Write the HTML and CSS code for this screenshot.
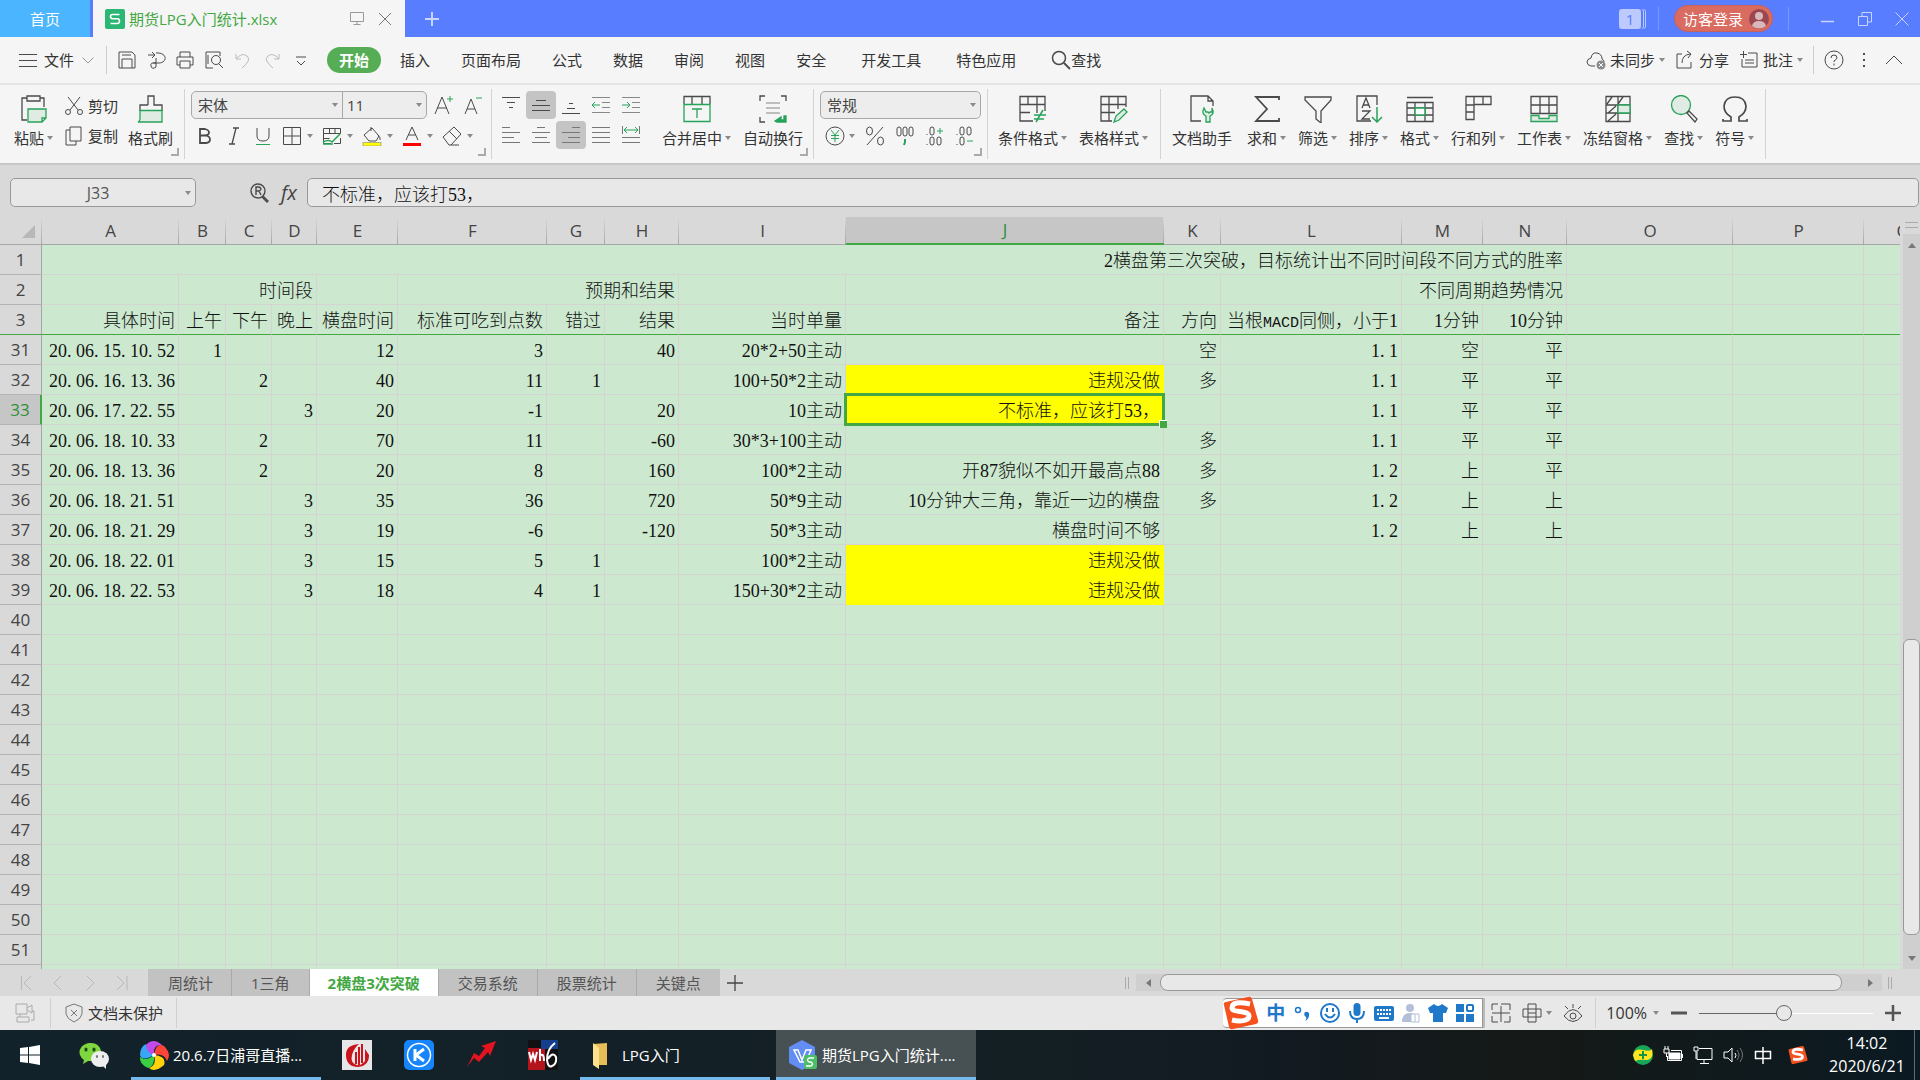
FILE: index.html
```html
<!DOCTYPE html>
<html lang="zh-CN">
<head>
<meta charset="utf-8">
<title>期货LPG入门统计.xlsx</title>
<link rel="stylesheet" href="styles.css">
</head>
<body>
<header class="titlebar">
  <button class="home-tab">首页</button>
  <div class="doc-tab">
    <svg class="i20" viewBox="0 0 20 20"><rect width="20" height="20" rx="2" fill="#2bb673"/><path d="M14.500 5.500h-7q-2 0-2 2t2 2.300h5q2 0 2 2.300t-2 2.400h-7" fill="none" stroke="#fff" stroke-width="1.600"/></svg>
    <span class="doc-name">期货LPG入门统计.xlsx</span>
    <button aria-label="窗口"><svg class="i16" viewBox="0 0 16 16"><path d="M1.500 1.500h13v9h-13zM8 10.500v3M4.500 13.500h7" stroke="#999"/></svg></button>
    <button aria-label="关闭标签"><svg class="i16" viewBox="0 0 16 16"><path d="M2 2l12 12M14 2L2 14" stroke="#777"/></svg></button>
  </div>
  <button class="new-tab" aria-label="新建"><svg class="i16" viewBox="0 0 16 16"><path d="M8 1v14M1 8h14" stroke="#c9d5ff" stroke-width="2"/></svg></button>
  <div class="title-right">
    <button class="count">1</button>
    <i class="tsep"></i>
    <button class="login">访客登录<svg class="i20" viewBox="0 0 20 20"><circle cx="10" cy="10" r="10" fill="#9c4650"/><circle cx="10" cy="7" r="4" fill="#d9b8bc"/><path d="M3 17q1-5 7-5t7 5q-7 5-14 0" fill="#d9b8bc"/></svg></button>
    <i class="tsep"></i>
    <div class="win">
      <button aria-label="最小化"><svg class="i16" viewBox="0 0 16 16"><path d="M1 10.500h13" stroke="#c9d5ff" stroke-width="1.500"/></svg></button>
      <button aria-label="还原"><svg class="i16" viewBox="0 0 16 16"><path d="M1.500 5.500h9v9h-9zM5 5V1.500h9.500V11H11" stroke="#c9d5ff"/></svg></button>
      <button aria-label="关闭"><svg class="i16" viewBox="0 0 16 16"><path d="M1.500 1.500l13 13M14.500 1.500l-13 13" stroke="#c9d5ff"/></svg></button>
    </div>
  </div>
</header>

<div class="menubar">
  <button class="file"><svg class="i20" viewBox="0 0 20 20"><path d="M1 4.500h18M1 10.500h18M1 16.500h18"/></svg>文件<svg class="i12" viewBox="0 0 12 12"><path d="M.5 3.500L6 9l5.500-5.500" stroke="#999"/></svg></button>
  <i class="msep"></i>
  <div class="quick">
    <button aria-label="保存"><svg class="i20" viewBox="0 0 20 20"><path d="M2 2h13l3 3v13H2zM5 18V9h10v9M5 5h9"/></svg></button>
    <button aria-label="输出"><svg class="i20" viewBox="0 0 20 20"><path d="M2 5h7M6 2l3 3-3 3M10 3c12-1 12 11 1 10H7M10 8v9q-4 3-5-1t5-3"/></svg></button>
    <button aria-label="打印"><svg class="i20" viewBox="0 0 20 20"><path d="M5 7V2h10v5M5 15H2V7h16v8h-3M5 11h10v7H5z"/></svg></button>
    <button aria-label="预览"><svg class="i20" viewBox="0 0 20 20"><path d="M9 18H2V2h14v4M15 14l4 4M4 5v9"/><circle cx="12" cy="10" r="4.500"/></svg></button>
    <button aria-label="撤销"><svg class="i20" viewBox="0 0 20 20"><path d="M3 4v5h5M3 9q6-7 11-3t-5 12" stroke="#bbb"/></svg></button>
    <button aria-label="重做"><svg class="i20" viewBox="0 0 20 20"><path d="M17 4v5h-5M17 9q-6-7-11-3t5 12" stroke="#bbb"/></svg></button>
    <button aria-label="自定义"><svg class="i20" viewBox="0 0 20 20"><path d="M5 7h10M6 11l4 4 4-4"/></svg></button>
  </div>
  <nav class="tabs">
    <button class="current">开始</button><button>插入</button><button>页面布局</button><button>公式</button><button>数据</button><button>审阅</button><button>视图</button><button>安全</button>
  </nav>
  <nav class="tabs wide">
    <button>开发工具</button><button>特色应用</button>
    <button class="find"><svg class="i20" viewBox="0 0 20 20"><circle cx="8" cy="8" r="6.500" stroke-width="1.500"/><path d="M13 13l6 6" stroke-width="1.800"/></svg>查找</button>
  </nav>
  <div class="menu-right">
    <button><svg class="i20" viewBox="0 0 20 20"><path d="M9 16H5q-4-1-4-4t4-4q1-6 6-5 5 1 5 6 2 1 2 3"/><circle cx="15" cy="15" r="4.500" fill="#8a8a8a" stroke="none"/><path d="M13 13l4 4M17 13l-4 4" stroke="#fff"/></svg>未同步<i class="caret"></i></button>
    <button><svg class="i20" viewBox="0 0 20 20"><path d="M7 4H2v14h14v-6M7 13q0-8 8-9M12 1l4 3-3 4"/></svg>分享</button>
    <button><svg class="i20" viewBox="0 0 20 20"><path d="M9 3h9v14H3V9M1 4.500h7M4.500 1v7M6 10h9M6 13h9"/></svg>批注<i class="caret"></i></button>
    <i class="msep"></i>
    <button aria-label="帮助"><svg class="i20" viewBox="0 0 20 20"><circle cx="10" cy="10" r="9"/><path d="M7 8q0-3 3-3t3 3q0 1-3 3v1M10 13.500v2"/></svg></button>
    <button aria-label="更多"><svg class="i20" viewBox="0 0 20 20"><path d="M10 3v2M10 9v2M10 15v2" stroke-width="2"/></svg></button>
    <button aria-label="折叠"><svg class="i20" viewBox="0 0 20 20"><path d="M2 14l8-8 8 8"/></svg></button>
  </div>
</div>

<div class="ribbon">
  <section class="group clip">
    <button class="big"><svg viewBox="0 0 28 28"><path d="M7 3H2v22h5M20 3h4v9M7 1h13v5H7z"/><path class="g" d="M8 14h18v9l-4 4H8zM26 23h-4v4"/></svg><span>粘贴<i class="caret"></i></span></button>
    <div class="pair">
      <button><svg class="i20" viewBox="0 0 20 20"><path d="M4 1l10 13M16 1L6 14"/><circle cx="4" cy="16" r="2.500"/><circle cx="16" cy="16" r="2.500"/></svg>剪切</button>
      <button><svg class="i20" viewBox="0 0 20 20"><path d="M6 1h11v14H6zM6 4H2v15h10v-4"/></svg>复制</button>
    </div>
    <button class="big"><svg viewBox="0 0 28 28"><path d="M11 10V1h6v9h8v6M3 16v-6h8"/><path class="g" d="M3 15.500h22V27H1q2-1 2-3z"/></svg><span>格式刷</span></button>
  </section>
  <section class="group font">
    <div class="row">
      <div class="combo">
        <label class="pick grow"><select aria-label="字体"><option>宋体</option></select></label><label class="pick size"><select aria-label="字号"><option>11</option></select></label>
      </div>
      <button aria-label="增大字号"><svg class="i20" viewBox="0 0 20 20"><path d="M1 19L8 2l7 17M3 13h10"/><path class="gl" d="M13 4h6M16 1v6"/></svg></button>
      <button aria-label="减小字号"><svg class="i20" viewBox="0 0 20 20"><path d="M1 19L7 4l6 15M3 14h8"/><path class="gl" d="M12 3h6"/></svg></button>
    </div>
    <div class="row tools">
      <button aria-label="加粗"><svg class="i20" viewBox="0 0 20 20"><path d="M5 3h5q4 1 4 3.500t-4 3H5zM5 9.500h6q4 1 4 4T11 17H5z" stroke-width="1.800"/></svg></button>
      <button aria-label="倾斜"><svg class="i20" viewBox="0 0 20 20"><path d="M9 2h6M5 18h6M12 2L8 18" stroke-width="1.300"/></svg></button>
      <button aria-label="下划线"><svg class="i20" viewBox="0 0 20 20"><path d="M4 2v8q0 5 6 5t6-5V2"/><path class="gl" d="M3 18.500h14"/></svg></button>
      <button aria-label="边框"><svg class="i20" viewBox="0 0 20 20"><path d="M1.500 1.500h17v17h-17zM10 1.500v17M1.500 10h17"/></svg><i class="caret"></i></button>
      <button aria-label="单元格样式"><svg class="i20" viewBox="0 0 20 20"><path d="M9 17.500H1.500v-15h17v5M18.500 12v5.500H12M1.500 7.500h17M1.500 12.500h6M7.500 3v5M13 3v5"/><path class="gl" d="M1 16q6-3 9 0l8-8M1 18h10" stroke-width="1.500"/></svg><i class="caret"></i></button>
      <button aria-label="填充颜色"><svg class="i20" viewBox="0 0 20 20"><path d="M9 1v4M2 9l8-7 7 8-3 5H7zM16 9q3 3 2 5"/><rect x="1" y="16.500" width="18" height="3.500" fill="#ff0" stroke="#888" stroke-width=".6"/></svg><i class="caret"></i></button>
      <button aria-label="字体颜色"><svg class="i20" viewBox="0 0 20 20"><path d="M4 14l6-13 6 13M6.500 9h7"/><path d="M1 18.500h18" stroke="red" stroke-width="3"/></svg><i class="caret"></i></button>
      <button aria-label="清除"><svg class="i20" viewBox="0 0 20 20"><path d="M1 11L12 1l7 7-10 11H7zM7 5l8 8M9 19h8"/></svg><i class="caret"></i></button>
    </div>
  </section>
  <section class="group align">
    <div class="aligns">
      <button aria-label="顶端对齐"><svg class="i20" viewBox="0 0 20 20"><path d="M1 2.500h18M6 7.500h8M8 12.500h4"/></svg></button>
      <button class="on" aria-label="垂直居中"><svg class="i20" viewBox="0 0 20 20"><path d="M5 5.500h10M1 10.500h18M1 15.500h18"/></svg></button>
      <button aria-label="底端对齐"><svg class="i20" viewBox="0 0 20 20"><path d="M8 8.500h4M6 13.500h8M1 18.500h18"/></svg></button>
      <button aria-label="减少缩进"><svg class="i20" viewBox="0 0 20 20"><path d="M1 2.500h18M11 7.500h8M11 12.500h8M1 17.500h18" stroke="#888"/><path class="gl" d="M1 10h8M4 7l-3 3 3 3"/></svg></button>
      <button aria-label="增加缩进"><svg class="i20" viewBox="0 0 20 20"><path d="M1 2.500h18M11 7.500h8M11 12.500h8M1 17.500h18" stroke="#888"/><path class="gl" d="M1 10h8M6 7l3 3-3 3"/></svg></button>
      <button aria-label="左对齐"><svg class="i20" viewBox="0 0 20 20"><path d="M1 2.500h8M1 7.500h18M1 12.500h12M1 17.500h18" stroke="#777"/></svg></button>
      <button aria-label="居中"><svg class="i20" viewBox="0 0 20 20"><path d="M6 2.500h8M1 7.500h18M4 12.500h12M1 17.500h18" stroke="#777"/></svg></button>
      <button class="on" aria-label="右对齐"><svg class="i20" viewBox="0 0 20 20"><path d="M11 2.500h8M1 7.500h18M7 12.500h12M1 17.500h18" stroke="#777"/></svg></button>
      <button aria-label="两端对齐"><svg class="i20" viewBox="0 0 20 20"><path d="M1 2.500h18M1 7.500h18M1 12.500h18M1 17.500h18" stroke="#777"/></svg></button>
      <button aria-label="分散对齐"><svg class="i20" viewBox="0 0 20 20"><path d="M1.500 1v8M18.500 1v8M1 12.500h18M1 17.500h18" stroke="#777"/><path class="gl" d="M3 5h14M6 2L3 5l3 3M14 2l3 3-3 3"/></svg></button>
    </div>
    <button class="big"><svg viewBox="0 0 28 28"><path d="M1 9V1.500h26V9M9 2v7M19 2v7"/><path class="gl" d="M1 9.500h26v17H1zM9 14h10M14 14v9"/></svg><span>合并居中<i class="caret"></i></span></button>
    <button class="big"><svg viewBox="0 0 28 28"><path d="M1 6V1h5M22 1h5v5M1 22v5h5"/><path d="M7 8h14M7 13h14M7 18h14" stroke="#aaa"/><path d="M16 26l6-4v3h3v-4h2v6h-9z" fill="#27a35a" stroke="#27a35a"/></svg><span>自动换行</span></button>
  </section>
  <section class="group number">
    <div class="combo"><label class="pick grow"><select aria-label="数字格式"><option>常规</option></select></label></div>
    <div class="row nums">
      <button aria-label="货币"><svg class="i20" viewBox="0 0 20 20"><circle cx="10" cy="10" r="9"/><path class="gl" d="M6 4l4 5 4-5M10 9v7M6 9.500h8M6 12.500h8"/></svg><i class="caret"></i></button>
      <button aria-label="百分比"><svg class="i20" viewBox="0 0 20 20"><path d="M18 1L2 19"/><ellipse cx="4.500" cy="5" rx="3" ry="4"/><ellipse cx="15.500" cy="15" rx="3" ry="4"/></svg></button>
      <button aria-label="千位分隔"><svg class="i20" viewBox="0 0 20 20"><rect x="2" y="1" width="4" height="9" rx="2"/><rect x="8" y="1" width="4" height="9" rx="2"/><rect x="14" y="1" width="4" height="9" rx="2"/><path class="gl" d="M10 13v3l-1 3" stroke-width="2"/></svg></button>
      <button aria-label="增加小数位"><svg class="i20" viewBox="0 0 20 20"><path d="M2 8v1M2 18v1"/><rect x="5" y="1" width="4" height="8" rx="2"/><rect x="5" y="11" width="4" height="8" rx="2"/><rect x="12" y="11" width="4" height="8" rx="2"/><path class="gl" d="M12 5h6M15 2v6"/></svg></button>
      <button aria-label="减少小数位"><svg class="i20" viewBox="0 0 20 20"><path d="M2 8v1M2 18v1"/><rect x="5" y="1" width="4" height="8" rx="2"/><rect x="12" y="1" width="4" height="8" rx="2"/><rect x="5" y="11" width="4" height="8" rx="2"/><path class="gl" d="M12 15h6"/></svg></button>
    </div>
  </section>
  <section class="group styles">
    <button class="big"><svg viewBox="0 0 28 28"><path d="M26 16V1.500H1V26h13M1 9.500h25M1 17.500h10M9 2v8M18 2v16"/><path class="gl" d="M15 20h12M15 24h10M24 15l-7 12" stroke-width="1.500"/></svg><span>条件格式<i class="caret"></i></span></button>
    <button class="big"><svg viewBox="0 0 28 28"><path d="M26 12V1.500H1V26h11M1 9.500h25M1 17.500h14M9 2v24M18 2v12"/><path class="g" d="M14 27l2-6 8-7 3 3-8 8z"/></svg><span>表格样式<i class="caret"></i></span></button>
  </section>
  <section class="group edit">
    <button class="big"><svg viewBox="0 0 28 28"><path d="M13 26H3V1h17l5 5v5M20 1v5h5"/><path class="g" d="M16 13q-3 6 2 8v6h4v-6q5-2 2-8v4h-2l-1 1-1-1h-2z"/></svg><span>文档助手</span></button>
    <button class="big"><svg viewBox="0 0 28 28"><path d="M26 5V2H3l11 12L3 26h23v-3" stroke-width="1.800"/></svg><span>求和<i class="caret"></i></span></button>
    <button class="big"><svg viewBox="0 0 28 28"><path d="M1 2h26v3L17 16v12l-5-4v-8L1 5z"/></svg><span>筛选<i class="caret"></i></span></button>
    <button class="big"><svg viewBox="0 0 28 28"><path d="M22 10V1H2v25h14M7 13l4-10 4 10M8 10h6M7 16h8l-8 8h8"/><path class="gl" d="M22 12v15M17 22l5 5 5-5" stroke-width="1.500"/></svg><span>排序<i class="caret"></i></span></button>
    <button class="big"><svg viewBox="0 0 28 28"><path d="M1 2.500h26M1 7.500h26v19H1zM1 13h26M1 20h26M9 8v18M19 8v18"/><path d="M9 13h10v7H9z" fill="#fff" stroke="#27a35a" stroke-width="1.500"/></svg><span>格式<i class="caret"></i></span></button>
    <button class="big"><svg viewBox="0 0 28 28"><path d="M2 1.500h25v8H10v15H2zM10 2v8H2M19 2v7M2 17h8"/></svg><span>行和列<i class="caret"></i></span></button>
    <button class="big"><svg viewBox="0 0 28 28"><path d="M1 1.500h26v17H1zM1 10h26M10 2v16M19 2v16"/><path class="g" d="M1 20.500h8v3h10v-3h8v6H1z"/></svg><span>工作表<i class="caret"></i></span></button>
    <button class="big"><svg viewBox="0 0 28 28"><path d="M2 1.500h24v25H2zM2 10h24M2 18h24M14 1v26M8 2L3 9M19 2l-5 7M12 11l-8 7M12 19l-8 7"/><path class="g" d="M14 10h12v8H14z"/></svg><span>冻结窗格<i class="caret"></i></span></button>
    <button class="big"><svg viewBox="0 0 28 28"><circle class="g" cx="11" cy="10" r="9.500"/><path d="M17 18l2-2 8 8-2 3z"/></svg><span>查找<i class="caret"></i></span></button>
    <button class="big"><svg viewBox="0 0 28 28"><path d="M2 24v2h8v-4Q3 18 3 11 4 2 14 2t11 9q0 7-7 11v4h8v-2" stroke-width="1.700"/></svg><span>符号<i class="caret"></i></span></button>
  </section>
</div>

<div class="formula">
  <label class="namebox"><input aria-label="名称框" value="J33"><i class="caret"></i></label>
  <div class="fx">
    <button aria-label="查找引用"><svg class="i20" viewBox="0 0 20 20" stroke-width="1.400"><circle cx="9" cy="8" r="7"/><path d="M7 12V4h3q2 1 2 2t-2 2H7M10 8l2 4M14 13l5 5-1 1-5-5"/></svg></button>
    <button aria-label="插入函数" class="fxb">fx</button>
  </div>
  <input class="expr" aria-label="编辑栏" value="不标准，应该打53，">
</div>

<main class="sheet">
  <div class="grid"><table id="cells"></table></div>
  <div class="vscroll">
    <i class="handle"></i>
    <button aria-label="向上"><i class="tri up"></i></button>
    <div class="track"><i class="thumb"></i></div>
    <button aria-label="向下"><i class="tri down"></i></button>
  </div>
</main>

<div class="sheetbar">
  <div class="navs">
    <button aria-label="第一张"><svg class="i16" viewBox="0 0 16 16"><path d="M3.500 1v14M13 1L6 8l7 7"/></svg></button>
    <button aria-label="上一张"><svg class="i16" viewBox="0 0 16 16"><path d="M11 1L4 8l7 7"/></svg></button>
    <button aria-label="下一张"><svg class="i16" viewBox="0 0 16 16"><path d="M5 1l7 7-7 7"/></svg></button>
    <button aria-label="最后一张"><svg class="i16" viewBox="0 0 16 16"><path d="M3 1l7 7-7 7M13 1v14"/></svg></button>
  </div>
  <div class="sheets"><button>周统计</button><button>1三角</button><button class="active">2横盘3次突破</button><button>交易系统</button><button>股票统计</button><button>关键点</button></div>
  <button class="add" aria-label="新建工作表"><svg class="i16" viewBox="0 0 16 16"><path d="M8 0v16M0 8h16" stroke="#444" stroke-width="1.300"/></svg></button>
  <div class="hscroll">
    <i class="bars"></i>
    <button aria-label="向左"><i class="tri left"></i></button>
    <div class="htrack"><i class="hthumb"></i></div>
    <button aria-label="向右"><i class="tri right"></i></button>
    <i class="bars"></i>
  </div>
</div>

<footer class="status">
  <button class="rec" aria-label="录制"><svg class="i20" viewBox="0 0 20 20"><path d="M1 1h11v10H1zM12 5l5-3v8l-5-3M4 14h10v5H2v-5zM17 8h2v9h-3M5 11v3" stroke="#aaa"/></svg></button>
  <i class="ssep"></i>
  <button class="protect"><svg class="i20" viewBox="0 0 20 20"><path d="M10 1l8 3v7q-1 5-8 8-7-3-8-8V4zM7 7l6 6M13 7l-6 6" stroke="#777"/></svg>文档未保护</button>
  <i class="ssep"></i>
  <div class="status-right">
    <div class="ime">
      <svg class="sogou" viewBox="0 0 36 34"><path d="M3 6q-3 0-2 3l5 22q1 3 4 2l23-5q3-1 2-4L29 3q-1-3-4-2z" fill="#f4511e"/><path d="M27 8q-18-4-18 4c0 5 17 2 17 8 0 5-9 6-17 4" fill="none" stroke="#fff" stroke-width="5"/></svg>
      <b>中</b>
      <svg class="i20" viewBox="0 0 20 20"><circle cx="5" cy="7" r="2.500" stroke="#1f78c8" stroke-width="1.500"/><path d="M12 9q5-1 4 4-1 4-4 5 2-2 1-4-3-2-1-5" fill="#1f78c8" stroke="none"/></svg>
      <svg class="i20" viewBox="0 0 20 20"><circle cx="10" cy="10" r="9" stroke="#1f78c8" stroke-width="2"/><path d="M7 5v4M13 5v4M5 11q5 7 10 0" stroke="#1f78c8" stroke-width="2"/></svg>
      <svg class="i20" viewBox="0 0 20 20"><rect x="6.500" y="0" width="7" height="13" rx="3.500" fill="#1f78c8" stroke="none"/><path d="M3 8q0 8 7 8t7-8M10 16v4" stroke="#1f78c8" stroke-width="2"/></svg>
      <svg class="i20" viewBox="0 0 20 20"><rect y="3" width="20" height="15" rx="2" fill="#1f78c8" stroke="none"/><path d="M3 7h14M3 11h14" stroke="#fff" stroke-width="2" stroke-dasharray="2 1"/><path d="M5 15h10" stroke="#fff" stroke-width="2"/></svg>
      <svg class="i20" viewBox="0 0 20 20"><circle cx="9" cy="5" r="4" fill="#b4bfd8" stroke="none"/><path d="M1 19q0-9 8-9t8 9z" fill="#b4bfd8" stroke="none"/><path d="M10 11h8v8h-8zM14 11v8" fill="#fff" stroke="#b4bfd8"/></svg>
      <svg class="i20" viewBox="0 0 20 20"><path d="M6 1q4 4 8 0l6 4-2 5h-3v9H5v-9H2L0 5z" fill="#1f78c8" stroke="none"/></svg>
      <svg class="i20" viewBox="0 0 20 20"><path d="M1 1h8v8H1zM1 11h8v8H1zM11 11h8v8h-8z" fill="#1f78c8" stroke="none"/><rect x="12" y="2" width="6" height="6" rx="1" stroke="#1f78c8" stroke-width="2"/></svg>
    </div>
    <div class="views">
      <button aria-label="普通视图"><svg class="i20" viewBox="0 0 20 20"><path d="M1 7V1h6M10 1h9v6M1 10h18M10 10V3M10 10v9M1 13v6h6M19 13v6h-6"/></svg></button>
      <button aria-label="分页预览"><svg class="i20" viewBox="0 0 20 20"><path d="M6 1h8v18H6zM1 6h18v8H1zM6 10h8"/></svg><i class="caret"></i></button>
      <button aria-label="护眼模式"><svg class="i20" viewBox="0 0 20 20"><path d="M1 13q9-13 18 0-9 11-18 0M10 1v4M2 3l3 3M18 3l-3 3"/><circle cx="10" cy="13" r="3"/></svg></button>
    </div>
    <i class="ssep"></i>
    <button class="pct">100%<i class="caret"></i></button>
    <button aria-label="缩小"><svg class="i16" viewBox="0 0 16 16"><path d="M0 8h16" stroke="#555" stroke-width="3"/></svg></button>
    <input type="range" aria-label="缩放" min="0" max="100" value="49">
    <button aria-label="放大"><svg class="i16" viewBox="0 0 16 16"><path d="M0 8h16M8 0v16" stroke="#555" stroke-width="2.500"/></svg></button>
  </div>
</footer>

<div class="taskbar">
  <button class="sq" aria-label="开始"><svg class="i20" viewBox="0 0 20 20"><path d="M0 3l8-1v7.500H0zM9 2l11-2v9.500H9zM0 10.500h8V18l-8-1zM9 10.500h11V20L9 18z" fill="#fff" stroke="none"/></svg></button>
  <button class="sq" aria-label="微信"><svg class="i30" viewBox="0 0 30 30"><path d="M10 3C3 4-1 10 1 15q1 3 4 5l-1 4 5-3q13 1 13-10-2-9-12-8" fill="#7fd63e" stroke="none"/><ellipse cx="21" cy="19" rx="9" ry="8" fill="#eee" stroke="none"/><path d="M24 26l3 3v-5" fill="#eee" stroke="none"/><path d="M7 9v1M15 9v1" stroke="#174b12" stroke-width="3" stroke-linecap="round"/><path d="M18 16v1M24 16v1" stroke="#777" stroke-width="2" stroke-linecap="round"/></svg></button>
  <button class="task run"><svg class="i30" viewBox="0 0 30 30"><path d="M15 15Q3 14 7 5q7-8 16 0-9-1-8 10" fill="#c04bea" stroke="none"/><path d="M15 15Q17 2 25 6q8 8 3 15-3-8-13-6" fill="#ff4538" stroke="none"/><path d="M15 15q13 1 10 10-9 8-15 3 8-3 5-13" fill="#ffd30b" stroke="none"/><path d="M15 15q1 12-6 13-9-4-8-11 6 5 14-2" fill="#38cf45" stroke="none"/><path d="M15 15q-12 7-14 0 0-8 6-11 0 9 8 11" fill="#38a7f5" stroke="none"/><circle cx="15" cy="15" r="2" fill="#fff" stroke="none"/></svg>20.6.7日浦哥直播...</button>
  <button class="sq" aria-label="行情"><svg class="i30" viewBox="0 0 30 30"><path d="M0 0h30v30H0z" fill="#e6e6e8" stroke="none"/><path d="M17 4Q3 5 4 16t12 11q11-1 11-12l-4-6v12q-4 5-8 4-7-2-5-10 2-7 7-11" fill="#c9141c" stroke="none"/><path d="M14 12v12M17 7v18M20 4v19" stroke="#c9141c" stroke-width="2"/></svg></button>
  <button class="sq" aria-label="K线"><svg class="i30" viewBox="0 0 30 30"><rect width="30" height="30" rx="5" fill="#1684fa" stroke="none"/><circle cx="15" cy="15" r="11.500" stroke="#fff" stroke-width="1.500"/><path d="M11 9v12M20 9l-8 6 8 6" stroke="#fff" stroke-width="3"/></svg></button>
  <button class="sq" aria-label="走势"><svg class="i30" viewBox="0 0 30 30"><path d="M1 27l7-14 5 3 6-8-4-2 15-5-6 15-2-4-9 10-5-4z" fill="#e31320" stroke="none"/></svg></button>
  <button class="sq" aria-label="文华财经"><svg class="i30" viewBox="0 0 30 30"><path d="M0 0h30v30H0z" fill="#111" stroke="none"/><path d="M0 8h17v22H0z" fill="#b4151c" stroke="none"/><path d="M13 0h17v9H13z" fill="#153f8c" stroke="none"/><path d="M1 12l2 8 2-6 2 6 2-8M12 9v12M12 16q4-4 4 5" stroke="#fff" stroke-width="2"/><path d="M27 3q-8 6-8 17 1 8 5 6 5-2 4-9-3-6-8 2" stroke="#fff" stroke-width="2"/></svg></button>
  <button class="task run folder"><svg class="i30" viewBox="0 0 30 30"><path d="M5 4l14-1v22H7z" fill="#e8bd57" stroke="none"/><path d="M5 3l6 5v21l-6-4z" fill="#ffe08b" stroke="none"/></svg>LPG入门</button>
  <button class="task run active"><svg class="i30" viewBox="0 0 30 30"><path d="M14 0l13 7v16l-13 7-13-7V7z" fill="#628df2" stroke="none"/><path d="M6 10h4l4 10 4-10h5l-5 12h-6z" stroke="#fff" stroke-width="1.500"/><rect x="16" y="15" width="13" height="14" rx="2" fill="#4cbe68" stroke="none"/><path d="M26 18h-5q-3 2 0 4h2q3 2 0 4h-5" stroke="#fff" stroke-width="1.500"/></svg>期货LPG入门统计....</button>
  <div class="tray">
    <svg class="i20" viewBox="0 0 20 20"><circle cx="10" cy="10" r="10" fill="#18a558" stroke="none"/><path d="M0 10q2-7 10-5 8 2 9-1 2 10-5 11-8-1-12 1z" fill="#ffe51e" stroke="none"/><path d="M10 6v8M6 10h8" stroke="#159447" stroke-width="2"/></svg>
    <svg class="i20" viewBox="0 0 20 20"><path d="M6 8h11v6H6z" fill="#fff" stroke="#fff"/><path d="M8 5.500h10.500v10h-14V11M19.500 9v4M1 4h5v4H1zM3.500 8v4M2 1v3M5 1v3" stroke="#fff"/></svg>
    <svg class="i20" viewBox="0 0 20 20"><path d="M6 3.500h13v11H4V7M11 14.500v4M7 18.500h9M1 2h4v4H1zM3 6v8" stroke="#fff"/></svg>
    <svg class="i20" viewBox="0 0 20 20"><path d="M1 7h4l4-4v14l-4-4H1z" stroke="#fff"/><path d="M12 8q2 2 0 5" stroke="#fff"/><path d="M14 5q4 5 0 10M17 3q5 7 0 14" stroke="#777"/></svg>
    <svg class="i20" viewBox="0 0 20 20"><path d="M2.500 6.500h15v7h-15zM10 2v17" stroke="#fff" stroke-width="1.500"/></svg>
    <svg class="i20 last" viewBox="0 0 36 34"><path d="M3 6q-3 0-2 3l5 22q1 3 4 2l23-5q3-1 2-4L29 3q-1-3-4-2z" fill="#f4511e" stroke="none"/><path d="M27 8q-18-4-18 4c0 5 17 2 17 8 0 5-9 6-17 4" stroke="#fff" stroke-width="5"/></svg>
  </div>
  <div class="clock"><span>14:02</span><span>2020/6/21</span></div>
  <i class="desk"></i>
</div>
<script src="grid.js"></script>
</body>
</html>
```

FILE: styles.css
```css
* { box-sizing: border-box; }
body {
  margin: 0;
  height: 100vh;
  display: flex;
  flex-direction: column;
  overflow: hidden;
  font: 15px/20px "Open Sans", "Noto Sans CJK SC", sans-serif;
  color: #333;
  background: #f5f5f5;
}
button {
  display: flex;
  align-items: center;
  justify-content: center;
  padding: 0;
  border: 0;
  background: none;
  font: inherit;
  color: inherit;
  white-space: nowrap;
}
svg { flex: none; fill: none; stroke: #4a4a4a; }
i { flex: none; }
.i12 { width: 12px; height: 12px; }
.i16 { width: 16px; height: 16px; }
.i20 { width: 20px; height: 20px; }
.i30 { width: 30px; height: 30px; }
.g { fill: #e0ebe4; stroke: #27a35a; }
.gl { stroke: #27a35a; }
.caret {
  border: 3px solid transparent;
  border-top: 4px solid #8a8a8a;
  border-bottom: 0;
}

/* title bar */
.titlebar { flex: none; display: flex; height: 37px; background: #597dff; }
.home-tab { width: 90px; margin-right: 3px; background: #4cb5ff; color: #fff; }
.doc-tab {
  width: 312px;
  display: flex;
  align-items: center;
  gap: 12px;
  padding: 0 12px;
  background: #f5f5f5;
  color: #43a843;
}
.doc-tab .i20 { margin-right: -8px; stroke: none; }
.doc-name { flex: 1; }
.new-tab { width: 54px; }
.title-right { margin-left: auto; display: flex; align-items: center; }
.count {
  width: 22px;
  height: 20px;
  margin-right: 17px;
  border-radius: 3px;
  background: #bccaff;
  color: #597dff;
  box-shadow: 2px 0 #597dff, 3px 0 #bccaff, 4px 0 #597dff, 5px 0 #bccaff;
}
.tsep { width: 1px; height: 24px; background: #7b97ff; }
.login {
  gap: 6px;
  height: 27px;
  margin: 0 15px;
  padding: 0 3px 0 8px;
  border: 1px solid #c8605c;
  border-radius: 14px;
  background: #d96b60;
  color: #fff;
}
.login svg { stroke: none; }
.win { display: flex; gap: 21px; padding: 0 10px 0 31px; }

/* menu bar */
.menubar {
  flex: none;
  display: flex;
  align-items: center;
  height: 48px;
  border-bottom: 2px solid #e4e4e4;
}
.file { margin-left: 18px; gap: 6px; }
.file .i12 { margin-left: 2px; }
.msep { width: 1px; height: 28px; background: #ccc; }
.file + .msep { margin: 0 10px 0 12px; }
.quick { display: flex; gap: 9px; }
.tabs { display: flex; align-items: center; gap: 31px; margin-left: 16px; }
.tabs.wide { gap: 35px; margin-left: 35px; }
.tabs .current {
  height: 26px;
  padding: 0 12px;
  margin-right: -12px;
  border-radius: 13px;
  background: #55ad55;
  color: #fff;
  font-weight: 700;
}
.menu-right { margin-left: auto; display: flex; align-items: center; gap: 10px; padding-right: 16px; }
.menu-right button { gap: 4px; }

/* ribbon */
.ribbon { flex: none; display: flex; height: 80px; padding: 4px 0; border-bottom: 2px solid #c8c8c8; }
.group { position: relative; display: flex; border-right: 1px solid #d4d4d4; }
.clip::after, .font::after, .align::after, .number::after {
  content: "";
  position: absolute;
  right: 5px;
  bottom: 3px;
  width: 6px;
  height: 6px;
  border: 2px solid #aaa;
  border-width: 0 2px 2px 0;
}
.big { flex-direction: column; justify-content: flex-start; gap: 5px; padding-top: 6px; }
.big svg { width: 28px; height: 28px; stroke-width: 1.300; }
.big span { display: flex; align-items: center; gap: 3px; line-height: 20px; }
.clip { width: 185px; padding-left: 14px; }
.pair { display: flex; flex-direction: column; gap: 10px; margin: 7px 10px 0 11px; }
.pair button { gap: 4px; }
.row { display: flex; align-items: center; }
.font { width: 307px; padding: 2px 6px; flex-direction: column; gap: 3px; }
.font .row { gap: 10px; height: 28px; }
.font .row .combo { margin-right: -3px; }
.font .tools { gap: 9px; padding-left: 4px; }
.tools button { gap: 5px; }
.combo { display: flex; flex: 1; border: 1px solid #a8a8a8; border-radius: 5px; height: 28px; background: #ededed; }
.font .combo { flex: none; width: 236px; }
.pick { position: relative; display: flex; align-items: center; }
.grow { flex: 1; }
.size { width: 84px; border-left: 1px solid #a8a8a8; }
.pick select {
  appearance: none;
  width: 100%;
  height: 26px;
  padding: 0 6px;
  border: 0;
  background: none;
  font: inherit;
  color: #444;
}
.size select { padding: 0 4px; }
.pick::after {
  content: "";
  position: absolute;
  right: 4px;
  border: 3px solid transparent;
  border-top: 4px solid #8a8a8a;
  border-bottom: 0;
}
.align { width: 322px; padding-left: 4px; }
.aligns { display: grid; grid-template-columns: repeat(5, 30px); grid-auto-rows: 28px; gap: 2px 0; padding-top: 2px; margin-right: 16px; }
.aligns .on { border-radius: 4px; background: #c4c4c4; }
.align .big + .big { margin-left: 12px; }
.number { width: 174px; padding: 2px 6px; flex-direction: column; gap: 3px; }
.number .combo { flex: none; }
.nums { height: 28px; gap: 10px; padding-left: 5px; }
.nums button { gap: 4px; }
.styles { width: 173px; padding-left: 10px; gap: 12px; }
.edit { padding: 0 11px; gap: 12px; }
.edit button:first-child { margin-right: 3px; }

/* formula bar */
.formula {
  flex: none;
  display: flex;
  align-items: center;
  height: 52px;
  padding: 3px 1px 0 10px;
  background: #d9d9d9;
}
.namebox {
  display: flex;
  align-items: center;
  width: 186px;
  height: 29px;
  padding-right: 4px;
  border: 1px solid #999;
  border-radius: 5px;
  background: #e8e8e8;
}
.namebox input { flex: 1; min-width: 0; border: 0; background: none; text-align: center; font: inherit; font-size: 16px; color: #555; }
.fx { display: flex; gap: 10px; margin: 0 8px 0 53px; }
.fxb { width: 20px; font: italic 20px/20px "Open Sans", sans-serif; color: #444; }
.expr {
  flex: 1;
  min-width: 0;
  height: 29px;
  padding: 0 14px;
  border: 1px solid #999;
  border-radius: 5px;
  background: #e8e8e8;
  font: 300 18px/24px "Liberation Serif", "Noto Sans CJK SC", serif;
  color: #111;
}

/* worksheet */
.sheet { flex: 1; min-height: 0; display: flex; background: #d9d9d9; }
.grid { flex: 1; min-width: 0; overflow: hidden; background: #cce8cf; }
table { table-layout: fixed; border-collapse: separate; border-spacing: 0; }
thead th {
  height: 28px;
  padding: 0;
  border-bottom: 1px solid #a6a6a6;
  background: linear-gradient(#d9d9d9, #a6a6a6) right / 1px 100% no-repeat #d9d9d9;
  font-size: 17px;
  font-weight: 400;
  color: #444;
  overflow: hidden;
}
thead th:first-child { position: relative; }
thead th:first-child::after {
  content: "";
  position: absolute;
  right: 7px;
  bottom: 6px;
  border-left: 13px solid transparent;
  border-bottom: 13px solid #b8b8b8;
}
thead .sel { background-color: #c6c6c6; border-bottom: 2px solid #43a843; color: #2f8f3a; }
tbody th {
  height: 30px;
  padding: 0;
  border-right: 1px solid #a6a6a6;
  border-bottom: 1px solid #b4b4b4;
  background: #d9d9d9;
  font-size: 17px;
  line-height: 22px;
  font-weight: 400;
  color: #444;
}
tbody th.sel { background: #c6c6c6; border-right: 2px solid #43a843; color: #2f8f3a; }
td {
  height: 30px;
  padding: 2px 3px 0 0;
  border-right: 1px solid #d4d4d4;
  border-bottom: 1px solid #d4d4d4;
  text-align: right;
  white-space: nowrap;
  font: 300 18px/24px "Liberation Serif", "Noto Sans CJK SC", serif;
  color: #111;
}
.frozen th, .frozen td { border-bottom-color: #43a843; }
td.hl { background: #ff0; border-color: #ff0; }
td.cursor { position: relative; }
td.cursor::before { content: ""; position: absolute; inset: -2px; border: 3px solid #43a843; }
td.cursor::after {
  content: "";
  position: absolute;
  right: -4px;
  bottom: -4px;
  width: 7px;
  height: 7px;
  border: solid #fff;
  border-width: 1px 0 0 1px;
  background: #43a843;
}
.mono { font-family: "Liberation Mono", monospace; font-size: 15px; line-height: 1; }
.dot { display: inline-block; width: 9px; text-align: left; }

.vscroll { flex: none; display: flex; flex-direction: column; width: 20px; padding-left: 3px; }
.handle { height: 6px; margin: 5px 2px 6px; border: solid #aaa; border-width: 1px 0; }
.vscroll button { height: 22px; background: #cfcfcf; }
.track { flex: 1; display: flex; flex-direction: column; background: #cfcfcf; }
.track::before { content: ""; flex: 382; }
.track::after { content: ""; flex: 12; }
.thumb { flex: 294; border: 1px solid #999; border-radius: 6px; background: #e8e8e8; }
.tri { border: 4px solid transparent; }
.up { border-bottom: 5px solid #777; border-top: 0; }
.down { border-top: 5px solid #777; border-bottom: 0; }
.left { border-right: 5px solid #777; border-left: 0; }
.right { border-left: 5px solid #777; border-right: 0; }

/* sheet tabs */
.sheetbar { flex: none; display: flex; align-items: center; height: 27px; background: #d9d9d9; color: #555; }
.navs { display: flex; gap: 16px; width: 148px; padding-left: 18px; }
.navs svg { stroke: #b8b8b8; }
.sheets { display: flex; align-self: stretch; }
.sheets button { padding: 0 19px; border-right: 1px solid #aaa; background: #c2c2c2; }
.sheets button:first-child { padding: 0 18px 0 20px; }
.sheets button:last-child { border-right: 0; }
.sheets .active { padding: 0 18px; background: #fff; color: #43a843; font-weight: 700; }
.add { margin-left: 7px; }
.hscroll { display: flex; align-items: center; flex: 1; max-width: 767px; margin: 0 28px 0 auto; }
.hscroll button { width: 24px; height: 17px; background: #cfcfcf; }
.bars { width: 4px; height: 12px; border: solid #aaa; border-width: 0 1px; }
.bars:first-child { margin-right: 7px; }
.bars:last-child { margin-left: 6px; }
.htrack { flex: 1; height: 17px; padding-right: 16px; background: #cfcfcf; }
.hthumb { display: block; height: 17px; border: 1px solid #999; border-radius: 8px; background: #e8e8e8; }

/* status bar */
.status { flex: none; display: flex; align-items: center; height: 34px; background: #e8e8e8; }
.ssep { width: 1px; height: 30px; background: #d0d0d0; }
.rec { margin: 0 15px; }
.protect { gap: 4px; margin: 0 13px; }
.status-right { margin-left: auto; display: flex; align-items: center; padding-right: 19px; }
.ime {
  display: flex;
  align-items: center;
  gap: 7px;
  height: 30px;
  padding-right: 7px;
  margin-right: 8px;
  border: 1px solid #999;
  border-left: 0;
  border-radius: 4px 0 0 4px;
  background: #fff;
  box-shadow: 2px 0 #bbb;
}
.ime b { width: 20px; font-size: 19px; color: #1f78c8; }
.sogou { width: 36px; height: 34px; stroke: none; }
.views { display: flex; gap: 11px; margin-right: 12px; }
.views button, .pct { gap: 4px; }
.pct { margin: 0 12px 0 10px; font-size: 16px; gap: 6px; }
input[type="range"] { appearance: none; width: 174px; height: 20px; margin: 0 12px; background: none; }
input[type="range"]::-webkit-slider-runnable-track { height: 1px; background: linear-gradient(90deg, #666 50%, #fff 50%); }
input[type="range"]::-webkit-slider-thumb {
  appearance: none;
  width: 16px;
  height: 16px;
  margin-top: -8px;
  border: 1px solid #666;
  border-radius: 50%;
  background: #e8e8e8;
}

/* taskbar */
.taskbar {
  flex: none;
  display: flex;
  height: 50px;
  padding-right: 5px;
  background: linear-gradient(90deg, #12222b, #141f24 55%, #121a22 65%, #151917 80%, #0b1a22);
  color: #fff;
}
.sq { width: 62px; }
.sq:first-child { width: 60px; }
.sq:nth-child(2) { width: 68px; margin-right: 3px; }
.task { width: 190px; justify-content: flex-start; gap: 4px; padding: 0 8px; }
.run { border: solid #76b9ed; border-width: 0 0 3px; padding-top: 3px; }
.task.run + .sq { margin-left: 5px; }
.folder { margin-left: 6px; }
.task + .task { margin-left: 6px; }
.task.active { width: 200px; padding-left: 12px; background: #475052; }
.tray { display: flex; align-items: center; gap: 10px; margin: 0 12px 0 auto; }
.tray .last { margin-left: 5px; }
.clock { display: flex; flex-direction: column; justify-content: center; align-items: center; width: 94px; font-size: 16px; line-height: 23px; }
.desk { width: 1px; background: #667; }
```

FILE: grid.js
```js
const table = document.getElementById('cells');
const letters = 'ABCDEFGHIJKLMNOPQ'.split('');
const widths = [42, 137, 47, 46, 45, 81, 149, 58, 74, 167, 318, 57, 181, 81, 84, 166, 131, 78];

// [row number, [[column, text, colspan], ...]]
const rows = [
  [1, [['A', '2横盘第三次突破，目标统计出不同时间段不同方式的胜率', 14]]],
  [2, [['B', '时间段', 3], ['F', '预期和结果', 3], ['M', '不同周期趋势情况', 2]]],
  [3, [['A', '具体时间'], ['B', '上午'], ['C', '下午'], ['D', '晚上'], ['E', '横盘时间'], ['F', '标准可吃到点数'], ['G', '错过'], ['H', '结果'], ['I', '当时单量'], ['J', '备注'], ['K', '方向'], ['L', '当根MACD同侧，小于1'], ['M', '1分钟'], ['N', '10分钟']]],
  [31, [['A', '20.06.15.10.52'], ['B', '1'], ['E', '12'], ['F', '3'], ['H', '40'], ['I', '20*2+50主动'], ['K', '空'], ['L', '1.1'], ['M', '空'], ['N', '平']]],
  [32, [['A', '20.06.16.13.36'], ['C', '2'], ['E', '40'], ['F', '11'], ['G', '1'], ['I', '100+50*2主动'], ['J', '违规没做'], ['K', '多'], ['L', '1.1'], ['M', '平'], ['N', '平']]],
  [33, [['A', '20.06.17.22.55'], ['D', '3'], ['E', '20'], ['F', '-1'], ['H', '20'], ['I', '10主动'], ['J', '不标准，应该打53，'], ['L', '1.1'], ['M', '平'], ['N', '平']]],
  [34, [['A', '20.06.18.10.33'], ['C', '2'], ['E', '70'], ['F', '11'], ['H', '-60'], ['I', '30*3+100主动'], ['K', '多'], ['L', '1.1'], ['M', '平'], ['N', '平']]],
  [35, [['A', '20.06.18.13.36'], ['C', '2'], ['E', '20'], ['F', '8'], ['H', '160'], ['I', '100*2主动'], ['J', '开87貌似不如开最高点88'], ['K', '多'], ['L', '1.2'], ['M', '上'], ['N', '平']]],
  [36, [['A', '20.06.18.21.51'], ['D', '3'], ['E', '35'], ['F', '36'], ['H', '720'], ['I', '50*9主动'], ['J', '10分钟大三角，靠近一边的横盘'], ['K', '多'], ['L', '1.2'], ['M', '上'], ['N', '上']]],
  [37, [['A', '20.06.18.21.29'], ['D', '3'], ['E', '19'], ['F', '-6'], ['H', '-120'], ['I', '50*3主动'], ['J', '横盘时间不够'], ['L', '1.2'], ['M', '上'], ['N', '上']]],
  [38, [['A', '20.06.18.22.01'], ['D', '3'], ['E', '15'], ['F', '5'], ['G', '1'], ['I', '100*2主动'], ['J', '违规没做']]],
  [39, [['A', '20.06.18.22.53'], ['D', '3'], ['E', '18'], ['F', '4'], ['G', '1'], ['I', '150+30*2主动'], ['J', '违规没做']]],
];
for (let n = 40; n <= 51; n++) rows.push([n, []]);
rows.push(['', []]);

const highlighted = [32, 33, 38, 39];
const active = { row: 33, col: 'J' };

const format = text => text
  .replace(/\./g, '<span class="dot">.</span>')
  .replace(/[A-Z]+/g, word => `<span class="mono">${word}</span>`);

let html = '<colgroup>' + widths.map(w => `<col style="width:${w}px">`).join('') + '</colgroup>';
html += '<thead><tr><th></th>' + letters.map(c => `<th${c === active.col ? ' class="sel"' : ''}>${c}</th>`).join('') + '</tr></thead><tbody>';
for (const [n, cells] of rows) {
  html += `<tr${n === 3 ? ' class="frozen"' : ''}><th${n === active.row ? ' class="sel"' : ''}>${n}</th>`;
  for (let i = 0; i < letters.length;) {
    const cell = cells.find(c => c[0] === letters[i]);
    const span = cell && cell[2] || 1;
    const names = [];
    if (letters[i] === 'J' && highlighted.includes(n)) names.push('hl');
    if (letters[i] === active.col && n === active.row) names.push('cursor');
    html += `<td${span > 1 ? ` colspan="${span}"` : ''}${names.length ? ` class="${names.join(' ')}"` : ''}>${cell ? format(cell[1]) : ''}</td>`;
    i += span;
  }
  html += '</tr>';
}
table.style.width = widths.reduce((sum, w) => sum + w, 0) + 'px';
table.innerHTML = html + '</tbody>';
```
